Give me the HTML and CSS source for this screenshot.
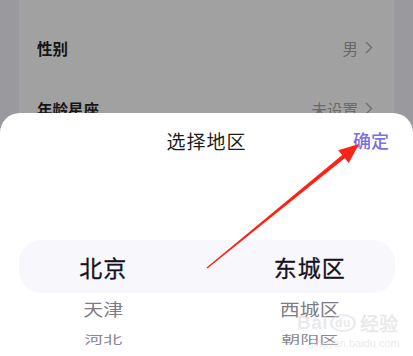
FILE: index.html
```html
<!DOCTYPE html>
<html lang="zh-CN">
<head>
    <meta charset="UTF-8">
    <meta name="viewport" content="width=device-width, initial-scale=1.0">
    <title>选择地区</title>
    <link rel="stylesheet" href="styles.css">
</head>
<body>
    <div class="profile-card">
        <div class="row">
            <span class="row-label">性别</span>
            <span class="row-value">男
                <svg class="chev" width="8" height="13" viewBox="0 0 8 13"><polyline points="1,1 6.5,6.5 1,12" fill="none" stroke="#6e6e6e" stroke-width="1.4"/></svg>
            </span>
        </div>
        <div class="row">
            <span class="row-label">年龄星座</span>
            <span class="row-value">未设置
                <svg class="chev" width="8" height="13" viewBox="0 0 8 13"><polyline points="1,1 6.5,6.5 1,12" fill="none" stroke="#6e6e6e" stroke-width="1.4"/></svg>
            </span>
        </div>
    </div>

    <div class="sheet">
        <div class="sheet-head">
            <span></span>
            <span class="sheet-title">选择地区</span>
            <span class="sheet-ok">确定</span>
        </div>
        <div class="picker">
            <div class="pick-row selected">
                <span>北京</span>
                <span>东城区</span>
            </div>
            <div class="pick-row near">
                <span>天津</span>
                <span>西城区</span>
            </div>
            <div class="pick-row far">
                <span>河北</span>
                <span>朝阳区</span>
            </div>
        </div>
    </div>

    <div class="watermark">
        <div class="wm-logo">Bai<span class="wm-du">du</span>经验</div>
        <div class="wm-url">jingyan.baidu.com</div>
    </div>

    <svg class="arrow" width="413" height="356" viewBox="0 0 413 356">
        <polygon points="206.6,267.4 342.2,155.1 338.2,150.2 359,144 348.8,163 344.8,158.2 207.4,268.6" fill="#fd2216"/>
    </svg>
</body>
</html>
```

FILE: styles.css
```css
* { margin: 0; padding: 0; box-sizing: border-box; }
body { width: 413px; height: 356px; overflow: hidden; position: relative; background: #9a9a9e; font-family: "Noto Sans CJK SC", "Noto Sans", sans-serif; }
.profile-card { margin: 0 19px; height: 356px; background: #a1a1a1; padding: 17px 21px 0 18px; }
.row { height: 61px; display: flex; align-items: center; justify-content: space-between; }
.row-label { font-size: 15.5px; font-weight: 700; color: #151515; }
.row-value { font-size: 15.5px; color: #686868; display: flex; align-items: center; gap: 7px; }
.sheet { position: absolute; top: 113px; left: 0; right: 0; bottom: 0; background: #fff; border-radius: 20px 20px 0 0; overflow: hidden; }
.sheet-head { height: 54px; display: grid; grid-template-columns: 1fr auto 1fr; align-items: center; }
.sheet-title { font-size: 19px; color: #1d1d1d; letter-spacing: 1px; }
.sheet-ok { justify-self: end; padding-right: 24px; font-size: 18px; font-weight: 500; color: #7c70e2; }
.picker { margin-top: 73px; }
.pick-row { display: grid; grid-template-columns: 1fr 1fr; text-align: center; position: relative; }
.pick-row span { position: relative; }
.selected { height: 53px; align-items: center; font-size: 23px; font-weight: 400; color: #16121f; letter-spacing: 1px; -webkit-text-stroke: 0.3px #16121f; }
.selected::before { content: ""; position: absolute; left: 19px; right: 18px; top: 0; bottom: 0; background: #f8f7fc; border-radius: 22px; }
.near { height: 30px; align-items: center; font-size: 20px; color: #807b87; transform: scaleY(0.85); }
.far { height: 30px; align-items: center; font-size: 19px; color: #8c8892; transform: scaleY(0.62); }
.watermark { position: absolute; left: 297px; top: 309px; color: rgba(215, 215, 220, 0.55); pointer-events: none; }
.wm-logo { font-family: "Liberation Sans", sans-serif; font-size: 19px; font-weight: 700; letter-spacing: 0.5px; display: flex; align-items: center; }
.wm-du { display: inline-block; font-size: 12px; border: 2px solid rgba(215, 215, 220, 0.55); border-radius: 50%; padding: 0 3px; margin: 0 4px 0 2px; }
.wm-url { font-family: "Liberation Sans", sans-serif; font-size: 11px; margin-left: 14px; margin-top: 1px; }
.arrow { position: absolute; top: 0; left: 0; pointer-events: none; }
```
